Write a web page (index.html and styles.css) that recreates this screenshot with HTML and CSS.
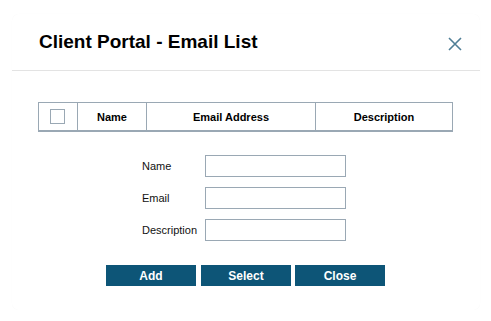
FILE: index.html
```html
<!DOCTYPE html>
<html lang="en">
<head>
  <meta charset="UTF-8" />
  <meta name="viewport" content="width=device-width,initial-scale=1" />
  <title>Client Portal - Email List</title>
  <link rel="stylesheet" href="styles.css">
</head>
<body>
  <div class="modal">
    <div class="modal-header">
      <h2>Client Portal - Email List</h2>
      <button class="close-x" aria-label="Close">
        <svg width="14" height="14" viewBox="0 0 14 14">
          <path d="M1 1 L13 13 M13 1 L1 13" stroke="#4f7e96" stroke-width="1.6" fill="none" />
        </svg>
      </button>
    </div>

    <div class="modal-body">
      <table class="email-table">
        <thead>
          <tr>
            <th class="col-check"><span class="check"></span></th>
            <th class="col-name">Name</th>
            <th class="col-email">Email Address</th>
            <th>Description</th>
          </tr>
        </thead>
      </table>

      <div class="entry-form">
        <label for="name">Name</label>
        <input type="text" id="name" />
        <label for="email">Email</label>
        <input type="text" id="email" />
        <label for="desc">Description</label>
        <input type="text" id="desc" />
      </div>

      <div class="actions">
        <button class="btn">Add</button>
        <button class="btn">Select</button>
        <button class="btn">Close</button>
      </div>
    </div>
  </div>
</body>
</html>
```

FILE: styles.css
```css
body {
  margin: 0;
  background: #fff;
  font-family: "Liberation Sans", Arial, sans-serif;
  color: #111;
}
.modal {
  box-sizing: border-box;
  width: 468px;
  height: 296px;
  margin: 14px 0 0 12px;
  background: #fff;
  border-radius: 7px;
  box-shadow: 0 0 1px rgba(0, 0, 0, 0.04);
}
.modal-header {
  box-sizing: border-box;
  height: 57px;
  display: flex;
  align-items: center;
  justify-content: space-between;
  padding: 0 18px 0 27px;
  border-bottom: 1px solid #e3e3e3;
}
.modal-header h2 {
  margin: 0 0 1px;
  font-size: 19px;
  font-weight: bold;
  color: #000;
}
.close-x {
  border: none;
  background: none;
  padding: 0;
  width: 14px;
  height: 14px;
  margin-top: 3px;
  cursor: pointer;
}
.close-x svg {
  display: block;
}
.modal-body {
  padding: 31px 27px 0 26px;
}
.email-table {
  width: 415px;
  border-collapse: collapse;
  border: 1px solid #9aa8b4;
  border-bottom-width: 2px;
}
.email-table th {
  height: 27px;
  padding: 0;
  font-size: 11px;
  font-weight: bold;
  color: #000;
  text-align: center;
  border-left: 1px solid #9aa8b4;
}
.email-table .col-check {
  width: 38px;
  border-left: none;
}
.email-table .col-name {
  width: 68px;
}
.email-table .col-email {
  width: 168px;
}
.check {
  display: block;
  box-sizing: border-box;
  width: 15px;
  height: 15px;
  margin: 0 auto 0 11px;
  border: 1px solid #9aa8b4;
}
.entry-form {
  display: grid;
  grid-template-columns: 63px 141px;
  row-gap: 10px;
  align-items: center;
  margin: 23px 0 0 104px;
}
.entry-form label {
  font-size: 11px;
  color: #111;
}
.entry-form input {
  box-sizing: border-box;
  width: 141px;
  height: 22px;
  margin: 0;
  border: 1px solid #9aa8b4;
  background: #fff;
}
.actions {
  display: flex;
  gap: 5px;
  margin: 24px 0 0 68px;
}
.btn {
  width: 90px;
  height: 21px;
  padding: 0;
  border: none;
  background: #0d5577;
  color: #fff;
  font-family: "Liberation Sans", Arial, sans-serif;
  font-size: 12px;
  font-weight: bold;
  cursor: pointer;
}
.btn + .btn + .btn {
  margin-left: -1px;
}
```
